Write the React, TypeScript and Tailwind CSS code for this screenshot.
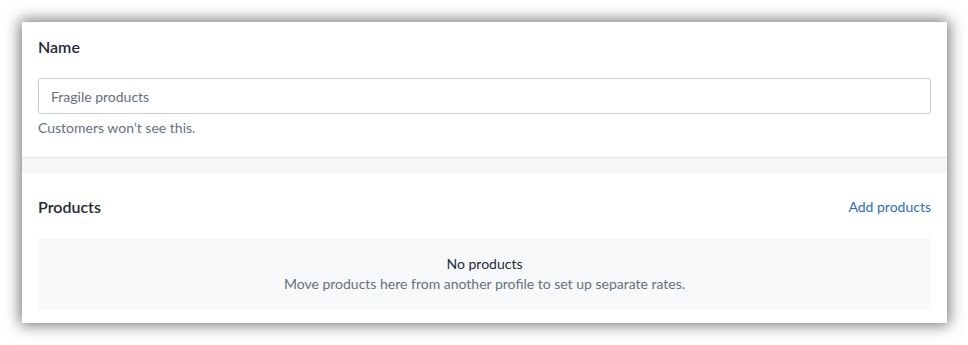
export default function App() {
  return (
    <div className="min-h-[345px] bg-white p-[22px] pb-[22px]" style={{ fontFamily: "Lato, 'Noto Sans', sans-serif" }}>
      <div className="w-[925px] bg-[#f4f6f8] shadow-[0_0_14px_2px_rgba(0,0,0,0.55)]">
        <div className="bg-white px-4 pt-[13px] pb-[19px] border-b border-[#dfe3e8]">
          <div className="text-[16px] leading-6 font-semibold text-[#212b36]">Name</div>
          <div className="mt-[19px] h-9 rounded-[3px] border border-[#c4cdd5] flex items-center px-3 text-[14px] text-[#666f7a]">
            Fragile products
          </div>
          <div className="mt-1 text-[14px] leading-5 text-[#637381]">Customers won’t see this.</div>
        </div>
        <div className="h-[15px]" />
        <div className="bg-white px-4 pt-[22px] pb-[13px]">
          <div className="flex items-center justify-between">
            <div className="text-[16px] leading-6 font-semibold text-[#212b36]">Products</div>
            <div className="text-[14px] leading-6 text-[#2c6ecb]">Add products</div>
          </div>
          <div className="mt-[19px] h-[72px] bg-[#f8f9fa] flex flex-col items-center justify-center text-[14px] leading-5">
            <div className="text-[#212b36]">No products</div>
            <div className="text-[#637381]">Move products here from another profile to set up separate rates.</div>
          </div>
        </div>
      </div>
    </div>
  );
}
